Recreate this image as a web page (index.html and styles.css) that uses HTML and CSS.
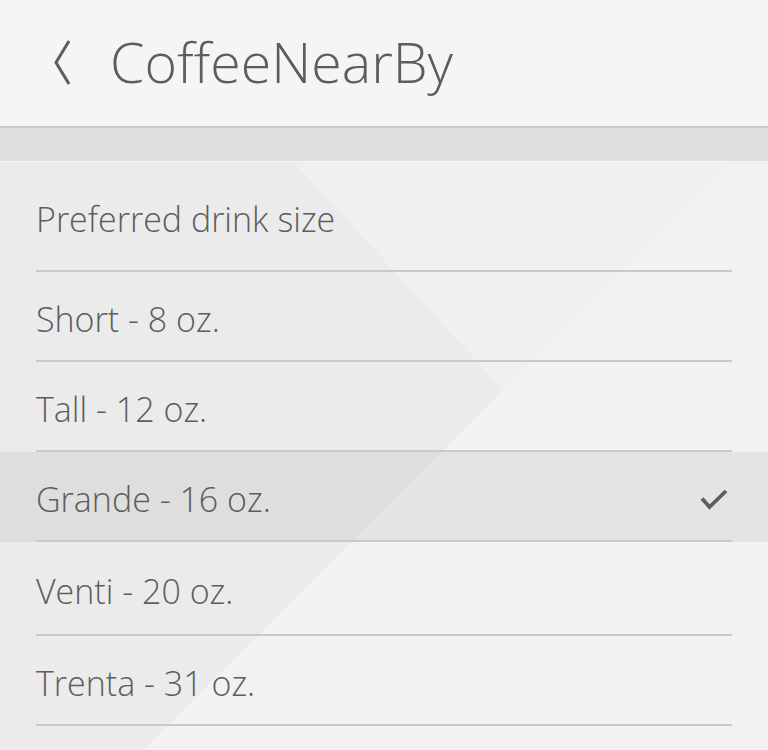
FILE: index.html
```html
<!DOCTYPE html>
<html lang="en">
<head>
<meta charset="utf-8">
<title>CoffeeNearBy</title>
<link rel="stylesheet" href="styles.css">
</head>
<body>
<div class="app">
  <header class="header">
    <button class="back" aria-label="Back">
      <svg width="18" height="48" viewBox="0 0 18 48">
        <polyline points="15,2 2,23.5 15,45" fill="none" stroke="#5d5d5d" stroke-width="3" stroke-linejoin="miter"/>
      </svg>
    </button>
    <h1 class="title">CoffeeNearBy</h1>
  </header>
  <div class="band"></div>
  <main class="content">
    <svg class="bg" width="768" height="588" viewBox="0 0 768 588" preserveAspectRatio="none" aria-hidden="true">
      <rect x="0" y="0" width="768" height="588" fill="#ebebeb"/>
      <polygon points="294,0 768,0 768,588 562,291" fill="#efefef"/>
      <polygon points="731,0 768,0 768,588 143,588" fill="#f2f2f2"/>
      <polygon points="294,0 731,0 503,228" fill="#f0f0f0"/>
    </svg>
    <ul class="list">
      <li class="row row-head"><span>Preferred drink size</span></li>
      <li class="row"><span>Short - 8 oz.</span></li>
      <li class="row"><span>Tall - 12 oz.</span></li>
      <li class="row selected"><span>Grande - 16 oz.</span>
        <svg class="check" width="28" height="22" viewBox="0 0 28 22">
          <polyline points="2,9.5 9.5,18 26,2" fill="none" stroke="#5d5d5d" stroke-width="3.8"/>
        </svg>
      </li>
      <li class="row row-tall"><span>Venti - 20 oz.</span></li>
      <li class="row"><span>Trenta - 31 oz.</span></li>
    </ul>
  </main>
</div>
</body>
</html>
```

FILE: styles.css
```css
* { box-sizing: border-box; }
html, body {
  margin: 0;
  padding: 0;
  width: 768px;
  height: 750px;
  overflow: hidden;
  background: #ededed;
  font-family: "Open Sans", "Noto Sans", "Liberation Sans", sans-serif;
  color: #5d5d5d;
}
.app {
  display: flex;
  flex-direction: column;
  height: 750px;
}
.header {
  height: 128px;
  flex: none;
  background: #f5f5f5;
  border-bottom: 2px solid #c9c9c9;
  display: flex;
  align-items: center;
  padding-left: 54px;
}
.back {
  border: 0;
  background: none;
  padding: 0;
  margin: 0 38px 0 0;
  display: flex;
  align-items: center;
  margin-top: -1px;
}
.title {
  margin: 0;
  font-weight: 300;
  font-size: 55.5px;
  letter-spacing: 0;
  color: #5d5d5d;
  margin-top: -4px;
}
.band {
  height: 34px;
  flex: none;
  background: #dfdfdf;
  border-bottom: 1px solid #f4f4f4;
}
.content {
  position: relative;
  flex: 1;
  overflow: hidden;
}
.bg {
  position: absolute;
  left: 0;
  top: 0;
}
.list {
  position: relative;
  list-style: none;
  margin: 0;
  padding: 0;
}
.row {
  position: relative;
  height: 90px;
  padding: 0 36px;
  display: flex;
  align-items: center;
  justify-content: space-between;
  font-size: 34px;
  font-weight: 300;
  border-bottom: 2px solid transparent;
}
.row::after {
  content: "";
  position: absolute;
  left: 36px;
  right: 36px;
  bottom: -2px;
  height: 2px;
  background: #c9c9c9;
}
.row span {
  padding-top: 6px;
}
.row-head {
  height: 110px;
}
.row-tall {
  height: 94px;
}
.selected {
  background: rgba(0, 0, 0, 0.055);
}
.check {
  margin-right: 4px;
  margin-top: 8px;
}
```
